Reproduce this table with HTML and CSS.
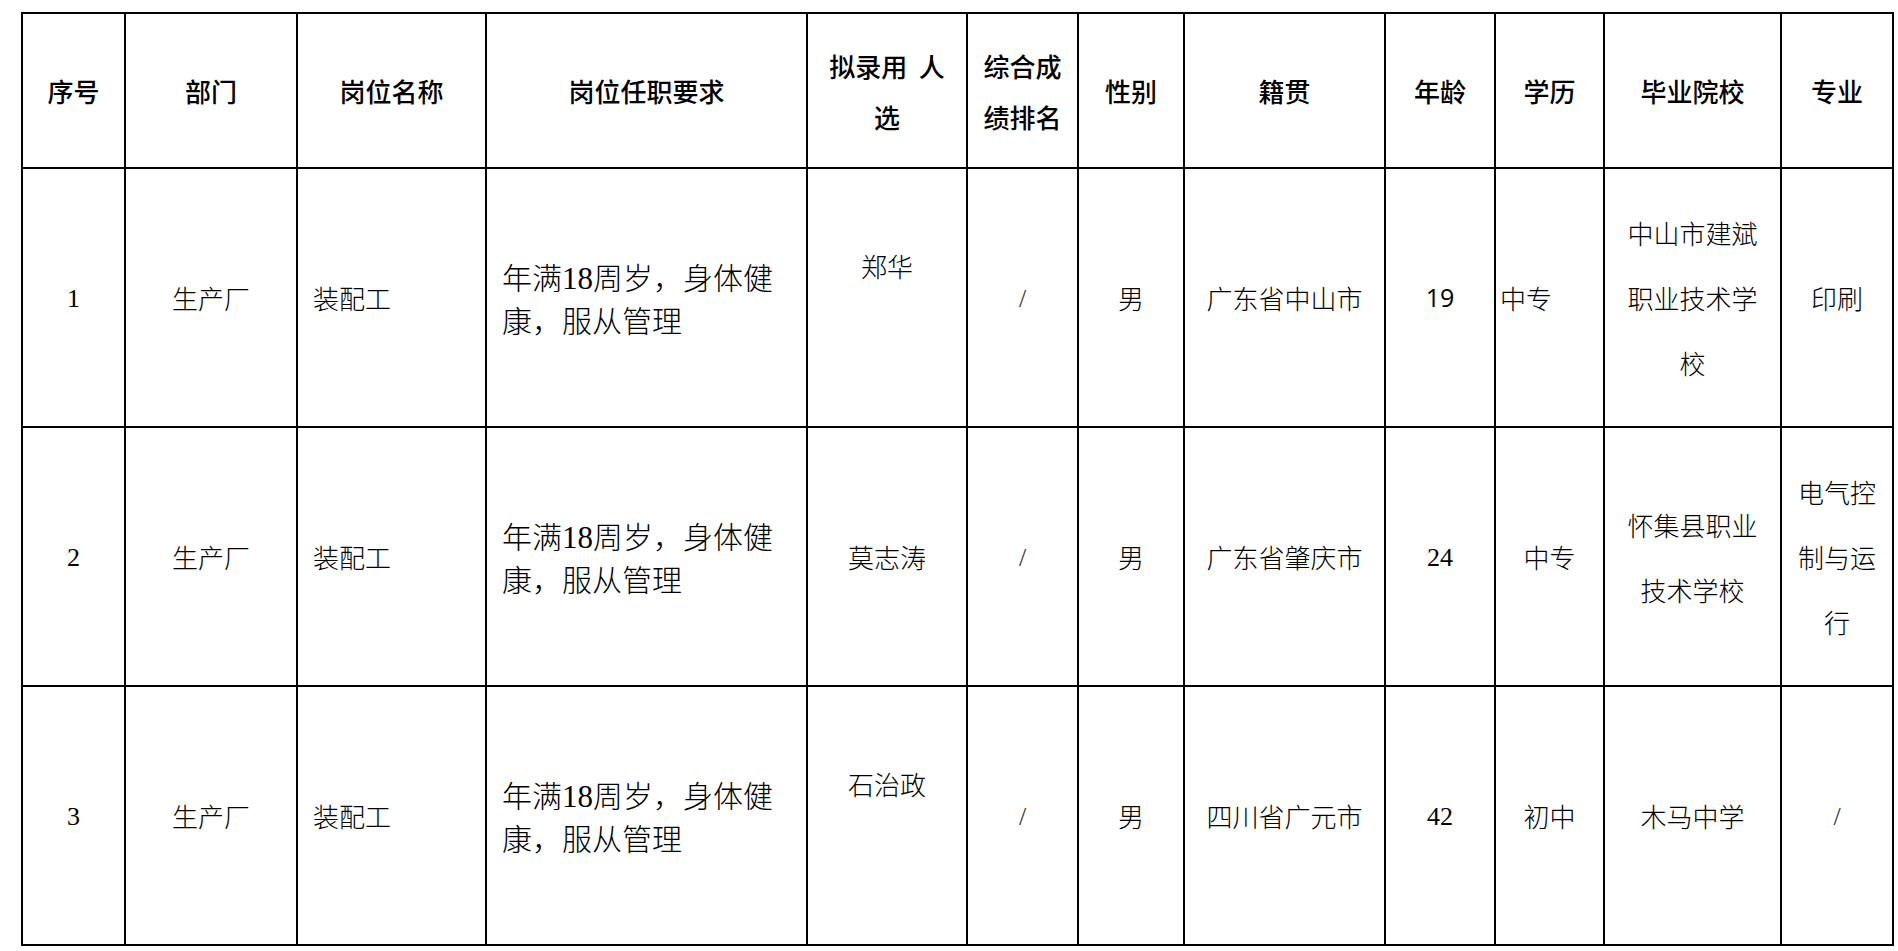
FILE: index.html
```html
<!DOCTYPE html>
<html lang="zh-CN">
<head>
<meta charset="utf-8">
<title>拟录用人员名单</title>
<link rel="stylesheet" href="styles.css">
</head>
<body>
<div class="page">
<table class="roster">
  <colgroup>
    <col class="c1"><col class="c2"><col class="c3"><col class="c4"><col class="c5"><col class="c6">
    <col class="c7"><col class="c8"><col class="c9"><col class="c10"><col class="c11"><col class="c12">
  </colgroup>
  <thead>
    <tr class="head">
      <th>序号</th>
      <th>部门</th>
      <th>岗位名称</th>
      <th>岗位任职要求</th>
      <th class="two">拟录用&nbsp;&nbsp;人<br>选</th>
      <th class="two">综合成<br>绩排名</th>
      <th>性别</th>
      <th>籍贯</th>
      <th>年龄</th>
      <th>学历</th>
      <th>毕业院校</th>
      <th>专业</th>
    </tr>
  </thead>
  <tbody>
    <tr class="row">
      <td><span class="num">1</span></td>
      <td>生产厂</td>
      <td class="left">装配工</td>
      <td class="desc">年满<span class="num">18</span>周岁，身体健<br>康，服从管理</td>
      <td class="multi">郑华<br>&nbsp;</td>
      <td><span class="num slash">/</span></td>
      <td>男</td>
      <td>广东省中山市</td>
      <td class="sans">19</td>
      <td class="left-tight">中专</td>
      <td class="multi">中山市建斌<br>职业技术学<br>校</td>
      <td>印刷</td>
    </tr>
    <tr class="row">
      <td><span class="num">2</span></td>
      <td>生产厂</td>
      <td class="left">装配工</td>
      <td class="desc">年满<span class="num">18</span>周岁，身体健<br>康，服从管理</td>
      <td>莫志涛</td>
      <td><span class="num slash">/</span></td>
      <td>男</td>
      <td>广东省肇庆市</td>
      <td><span class="num">24</span></td>
      <td>中专</td>
      <td class="multi">怀集县职业<br>技术学校</td>
      <td class="multi">电气控<br>制与运<br>行</td>
    </tr>
    <tr class="row">
      <td><span class="num">3</span></td>
      <td>生产厂</td>
      <td class="left">装配工</td>
      <td class="desc">年满<span class="num">18</span>周岁，身体健<br>康，服从管理</td>
      <td class="multi">石治政<br>&nbsp;</td>
      <td><span class="num slash">/</span></td>
      <td>男</td>
      <td>四川省广元市</td>
      <td><span class="num">42</span></td>
      <td>初中</td>
      <td>木马中学</td>
      <td><span class="num slash">/</span></td>
    </tr>
  </tbody>
</table>
</div>
</body>
</html>
```
FILE: styles.css
```css
html, body {
  margin: 0;
  padding: 0;
  background: #fff;
}
.page {
  padding: 12px 0 0 21px;
}
.roster {
  table-layout: fixed;
  border-collapse: collapse;
  width: 1871px;
  font-family: "Noto Sans CJK SC", sans-serif;
  font-size: 26px;
  color: #000;
}
.c1 { width: 103px; }
.c2 { width: 172px; }
.c3 { width: 189px; }
.c4 { width: 321px; }
.c5 { width: 160px; }
.c6 { width: 111px; }
.c7 { width: 106px; }
.c8 { width: 201px; }
.c9 { width: 110px; }
.c10 { width: 109px; }
.c11 { width: 177px; }
.c12 { width: 112px; }
.roster th, .roster td {
  border: 2px solid #000;
  padding: 0;
  text-align: center;
  vertical-align: middle;
  line-height: 1.3;
  font-weight: 300;
}
.roster th {
  font-weight: 500;
}
.num {
  font-family: "Liberation Serif", "Times New Roman", serif;
  font-weight: 400;
}
.slash {
  color: #333;
}
.head {
  height: 155px;
}
.roster th.two {
  line-height: 51px;
}
.row {
  height: 259px;
}
.roster td.left {
  text-align: left;
  padding-left: 15px;
}
.roster td.left-tight {
  text-align: left;
  padding-left: 4px;
}
.roster td.desc {
  text-align: left;
  padding-left: 15px;
  font-size: 30px;
  line-height: 40px;
}
.roster td.desc .num {
  font-size: 31px;
}
.roster td.multi {
  line-height: 65px;
}
.roster td.sans {
  font-family: "Open Sans", "Liberation Sans", sans-serif;
  font-weight: 400;
  font-size: 25px;
}
```
